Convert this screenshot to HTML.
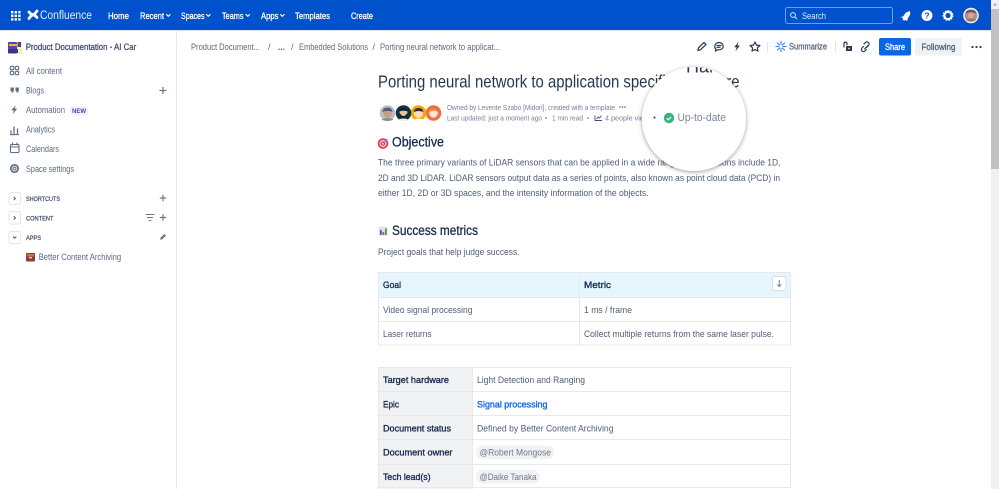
<!DOCTYPE html>
<html lang="en"><head><meta charset="utf-8"><title>Porting neural network to application specific hardware</title>
<style>
html,body{margin:0;padding:0;width:999px;height:489px;overflow:hidden;background:#fff}
svg{display:block;position:absolute;left:0;top:0;filter:blur(.3px)}
text{font-family:"Liberation Sans",sans-serif;white-space:pre}
.n{font-size:9px;fill:#fff;stroke:#fff;stroke-width:.28px}
.s{font-size:9px;fill:#5b6a82}
.b{font-size:9.5px;fill:#4f5d75}
.l{font-size:9.5px;fill:#172b4d;stroke:#172b4d;stroke-width:.35px}
.m{font-size:7.4px;fill:#76829a}
.h{font-size:13.5px;fill:#172b4d;stroke:#172b4d;stroke-width:.3px}
.c{font-size:6.8px;fill:#42526e;stroke:#42526e;stroke-width:.25px}
.i{fill:none;stroke:#253858;stroke-width:1.2;stroke-linecap:round;stroke-linejoin:round}
.g{fill:none;stroke:#5e6c84;stroke-width:1.1;stroke-linecap:round;stroke-linejoin:round}
</style></head><body>
<svg width="999" height="489" viewBox="0 0 999 489" xmlns="http://www.w3.org/2000/svg">
<defs>
<clipPath id="mag"><circle cx="694" cy="119" r="52"/></clipPath>
<filter id="sh" x="-30%" y="-30%" width="160%" height="160%"><feDropShadow dx="0" dy="1" stdDeviation="2" flood-color="#000" flood-opacity=".4"/></filter>
</defs>
<rect width="999" height="489" fill="#fff"/>

<!-- top bar -->
<rect width="991" height="30" fill="#0052cc"/>
<rect y="30" width="991" height="1" fill="#dfe5ee"/>
<g fill="#fff">
<rect x="11" y="11" width="2.4" height="2.4"/><rect x="14.6" y="11" width="2.4" height="2.4"/><rect x="18.2" y="11" width="2.4" height="2.4"/>
<rect x="11" y="14.6" width="2.4" height="2.4"/><rect x="14.6" y="14.6" width="2.4" height="2.4"/><rect x="18.2" y="14.6" width="2.4" height="2.4"/>
<rect x="11" y="18.2" width="2.4" height="2.4"/><rect x="14.6" y="18.2" width="2.4" height="2.4"/><rect x="18.2" y="18.2" width="2.4" height="2.4"/>
</g>
<path d="M29 18.5c2.500-4 4.800-5 8 -1M29 12c3 4 5.300 3 8-1" fill="none" stroke="#fff" stroke-width="2.800" stroke-linecap="round"/>
<text x="40" y="19.200" font-size="11.500" fill="#e6eefa" textLength="52" lengthAdjust="spacingAndGlyphs">Confluence</text>
<text class="n" x="108" y="18.800" textLength="21" lengthAdjust="spacingAndGlyphs">Home</text>
<text class="n" x="140" y="18.800" textLength="24" lengthAdjust="spacingAndGlyphs">Recent</text>
<text class="n" x="181" y="18.800" textLength="23.500" lengthAdjust="spacingAndGlyphs">Spaces</text>
<text class="n" x="222" y="18.800" textLength="21.500" lengthAdjust="spacingAndGlyphs">Teams</text>
<text class="n" x="261" y="18.800" textLength="17.500" lengthAdjust="spacingAndGlyphs">Apps</text>
<text class="n" x="295" y="18.800" textLength="35" lengthAdjust="spacingAndGlyphs">Templates</text>
<text class="n" x="351" y="18.800" textLength="22" lengthAdjust="spacingAndGlyphs">Create</text>
<g fill="none" stroke="#fff" stroke-width="1.100" stroke-linecap="round" stroke-linejoin="round">
<path d="M166.500 14.500l1.800 1.800 1.800-1.800M206.500 14.500l1.800 1.800 1.800-1.800M246 14.500l1.800 1.800 1.800-1.800M280.500 14.500l1.800 1.800 1.800-1.800"/>
</g>
<rect x="785.500" y="7.500" width="107" height="16" rx="2" fill="#0052cc" stroke="#6f9fe6"/>
<circle cx="793" cy="15" r="2.400" fill="none" stroke="#dce8fa" stroke-width="1"/><path d="M794.800 16.800l2 2" stroke="#dce8fa" stroke-width="1" stroke-linecap="round"/>
<text x="802" y="18.800" font-size="9" fill="#dce8fa" textLength="24" lengthAdjust="spacingAndGlyphs">Search</text>
<path d="M900.500 17l2.500-.5 3-4 4-1.500 .2 3.500-2.500 4-.5 2.500-2-1-1.200.8-1.500-1.500.6-1.200z" fill="#fff"/>
<circle cx="927" cy="15.500" r="5.500" fill="#fff"/><text x="927" y="18.700" font-size="8.500" font-weight="bold" fill="#0052cc" text-anchor="middle">?</text>
<circle cx="948" cy="15.500" r="3.600" fill="none" stroke="#fff" stroke-width="2"/><circle cx="948" cy="15.500" r="4.700" fill="none" stroke="#fff" stroke-width="1.500" stroke-dasharray="1.600 1.100"/>
<circle cx="971" cy="15.500" r="7.800" fill="#f3f3f3"/><circle cx="971" cy="15.500" r="6.300" fill="#b68d7c"/><path d="M965.500 13c1-4 10-4 11 0l-1.500 0c-3-1-6-1-8 0z" fill="#58597a"/><circle cx="971" cy="15.500" r="3" fill="#d8a78e"/><path d="M966 20c2-2 8-2 10 0-2 2-8 2-10 0z" fill="#8a7a78"/>

<!-- sidebar -->
<rect x="176" y="31" width="1" height="458" fill="#e6e8ec"/>
<rect x="8" y="42" width="14" height="12" fill="#f7f0b8"/><rect x="8" y="42" width="9" height="11.500" rx="1" fill="#5e3fb5"/><rect x="9" y="44" width="8" height="2" fill="#f2b631"/><rect x="8" y="49" width="10" height="4" fill="#42328c"/><rect x="17.500" y="42" width="3.500" height="5" fill="#42526e"/>
<text x="25.700" y="49.800" font-size="9" fill="#42526e" stroke="#42526e" stroke-width=".3" textLength="110.500" lengthAdjust="spacingAndGlyphs">Product Documentation - AI Car</text>
<g class="g">
<rect x="10.300" y="66.300" width="3.400" height="3.400" rx="1.200"/><rect x="15.300" y="66.300" width="3.400" height="3.400" rx="1.200"/><rect x="10.300" y="71.300" width="3.400" height="3.400" rx="1.200"/><rect x="15.300" y="71.300" width="3.400" height="3.400" rx="1.200"/>
<rect x="10.500" y="144.500" width="8.500" height="8" rx="1"/><path d="M10.500 147h8.500M12.500 143v2M17 143v2"/>
<circle cx="14.500" cy="168.500" r="1.500"/><circle cx="14.500" cy="168.500" r="3.700" stroke-width="1.700"/>
</g>
<path d="M10.500 87.500h3.300v3c0 1.300-.8 2-2.200 2.500v-2h-1.100zM15.500 87.500h3.300v3c0 1.300-.8 2-2.200 2.500v-2h-1.100z" fill="#5e6c84"/>
<path d="M15.800 105.200l-4.500 5h2.500l-1.200 3.900 4.600-5.300h-2.500z" fill="#5e6c84"/>
<path d="M11 133.500v-3M14 133.500v-7M17.500 133.500v-5M10 134.500h9" fill="none" stroke="#5e6c84" stroke-width="1.300"/>
<text class="s" x="26" y="74" textLength="36" lengthAdjust="spacingAndGlyphs">All content</text>
<text class="s" x="26" y="93.500" textLength="18" lengthAdjust="spacingAndGlyphs">Blogs</text>
<text class="s" x="26" y="113" textLength="39" lengthAdjust="spacingAndGlyphs">Automation</text>
<rect x="70" y="106" width="18" height="9" rx="1.500" fill="#f3f0ff"/>
<text x="72" y="113" font-size="6px" font-weight="bold" fill="#5243aa" textLength="14" lengthAdjust="spacingAndGlyphs">NEW</text>
<text class="s" x="26" y="132.500" textLength="29" lengthAdjust="spacingAndGlyphs">Analytics</text>
<text class="s" x="26" y="152" textLength="33" lengthAdjust="spacingAndGlyphs">Calendars</text>
<text class="s" x="26" y="171.800" textLength="48" lengthAdjust="spacingAndGlyphs">Space settings</text>
<g fill="#fff" stroke="#e4e6ea"><rect x="9" y="192.500" width="11.500" height="12" rx="2"/><rect x="9" y="211.500" width="11.500" height="12.500" rx="2"/><rect x="9" y="231.500" width="11.500" height="12" rx="2"/></g>
<path d="M13.700 196.800l1.700 1.700-1.700 1.700M13.700 216.200l1.700 1.700-1.700 1.700M13 236.500l1.700 1.700 1.700-1.700" fill="none" stroke="#42526e" stroke-width="1"/>
<text class="c" x="26" y="200.800" textLength="34" lengthAdjust="spacingAndGlyphs">SHORTCUTS</text>
<text class="c" x="26" y="220.300" textLength="27.500" lengthAdjust="spacingAndGlyphs">CONTENT</text>
<text class="c" x="26" y="240" textLength="15" lengthAdjust="spacingAndGlyphs">APPS</text>
<path d="M159.500 90.500h7M163 87v7M159.800 198h6.500M163 194.800v6.500M159.800 217.500h6.500M163 214.300v6.500" stroke="#6b778c" stroke-width="1.200" fill="none"/>
<path d="M145.500 214.500h9M147 217.500h6M148.800 220.500h2.500" stroke="#6b778c" stroke-width="1" fill="none"/>
<path d="M160 239.800l.6-2.300 3.700-3.500 1.700 1.600-3.700 3.600z" fill="#6b778c"/>
<rect x="26" y="253" width="9" height="8.500" rx="1" fill="#8c3f2b"/><rect x="27" y="254" width="7" height="2.500" fill="#c76d50"/><rect x="29" y="257" width="3" height="1.300" fill="#f0d8cf"/>
<text class="s" x="38.700" y="259.800" textLength="82.500" lengthAdjust="spacingAndGlyphs">Better Content Archiving</text>

<!-- breadcrumb -->
<text class="s" x="191" y="50" textLength="69" lengthAdjust="spacingAndGlyphs">Product Document...</text>
<text class="s" x="268" y="50">/</text>
<text class="s" x="278" y="50" font-weight="bold" textLength="7" lengthAdjust="spacingAndGlyphs">...</text>
<text class="s" x="291" y="50">/</text>
<text class="s" x="299" y="50" textLength="69" lengthAdjust="spacingAndGlyphs">Embedded Solutions</text>
<text class="s" x="372.500" y="50">/</text>
<text class="s" x="380" y="50" textLength="120" lengthAdjust="spacingAndGlyphs">Porting neural network to applicat...</text>

<!-- actions -->
<path d="M697.800 50.500l.8-2.800 5.400-5.300 2 2-5.400 5.300z" class="i"/>
<path d="M714.800 46.200c0-2.200 2-3.700 4.200-3.700s4.200 1.500 4.200 3.700-2 3.600-4.200 3.600h-1.500l-2 1.300.3-2c-.7-.6-1-1.800-1-2.900zM717 45.500h4M717 47.300h3" class="i"/>
<path d="M738.500 41.800l-4.300 5.500h2.500l-1.300 4 4.500-5.700h-2.500z" fill="#253858"/>
<path d="M755 42l1.500 3.100 3.400.4-2.500 2.300.6 3.300-3-1.600-3 1.600.6-3.300-2.500-2.300 3.400-.4z" class="i"/>
<rect x="767" y="42" width="1" height="10" fill="#e2e4e9"/>
<g stroke="#3d8be8" stroke-width="1.200" stroke-linecap="round"><path d="M781 41.500v3M781 48.500v3M776 46.500h3M783 46.500h3M777.500 43l2 2M782.500 48l2 2M784.500 43l-2 2M779.500 48l-2 2"/></g>
<text x="789" y="49.700" font-size="9" fill="#505f79" stroke="#505f79" stroke-width=".25" textLength="38" lengthAdjust="spacingAndGlyphs">Summarize</text>
<rect x="835" y="42" width="1" height="10" fill="#e2e4e9"/>
<path d="M844 47v-3.200c0-2.200 3-2.200 3 0v1" class="i"/><rect x="846" y="46" width="6" height="5" rx=".5" fill="#253858"/><rect x="848.300" y="47.800" width="1.400" height="1.400" fill="#fff"/>
<path d="M864.500 49l3.500-3.500M863.500 46.500l-1.500 1.500a2 2 0 0 0 3 3l1.500-1.500M866.500 47.500l2-2a2 2 0 0 0-3-3l-1.500 1.500" class="i"/>
<rect x="879" y="38" width="32" height="17.500" rx="2" fill="#0c66e4"/>
<text x="885" y="50" font-size="9" fill="#fff" stroke="#fff" stroke-width=".3" textLength="20" lengthAdjust="spacingAndGlyphs">Share</text>
<rect x="915" y="38" width="47" height="17.500" rx="2" fill="#f1f2f4"/>
<text x="921.500" y="50" font-size="9" fill="#505f79" stroke="#505f79" stroke-width=".3" textLength="34" lengthAdjust="spacingAndGlyphs">Following</text>
<g fill="#253858"><circle cx="972.500" cy="47" r="1.100"/><circle cx="976.500" cy="47" r="1.100"/><circle cx="980.500" cy="47" r="1.100"/></g>

<!-- title + meta -->
<text x="378" y="87.700" font-size="17.500px" fill="#253858" textLength="361.500" lengthAdjust="spacingAndGlyphs">Porting neural network to application specific hardware</text>
<circle cx="433.500" cy="113" r="7.800" fill="#f26f3d"/><circle cx="433.500" cy="113.500" r="4.200" fill="#fde6d8"/><path d="M428.500 115c-1.500-8 11-8 10 0l-1.200-3c-2-1.500-5.500-1.500-7.600 0z" fill="#f59a5c"/>
<circle cx="418.500" cy="113" r="7.800" fill="#f6a800"/><circle cx="418.500" cy="113.500" r="4.500" fill="#fbdcc0"/><path d="M413.800 112c0-5.500 9.500-5.500 9.500 0-3-1.200-6.500-1.200-9.500 0z" fill="#3a3328"/><path d="M412.500 120.500c3-2.500 9-2.500 12 0-3 1.500-9 1.500-12 0z" fill="#fff"/>
<circle cx="403.500" cy="113" r="7.800" fill="#10333f"/><circle cx="403.500" cy="112.300" r="4" fill="#e9c0a0"/><path d="M399.300 111.500c0-5 8.400-5 8.400 0-2-1-6.400-1-8.400 0zM399.800 113c1.800 4 5.600 4 7.400 0l.2 3-3.900 2.500-3.900-2.500z" fill="#10222c"/><path d="M398 120c3-2 8-2 11 0-3 1.500-8 1.500-11 0z" fill="#eee"/>
<circle cx="387.500" cy="113" r="8.200" fill="#fff"/><circle cx="387.500" cy="113" r="7.800" fill="#b9bfc9"/><circle cx="387.500" cy="113.500" r="4.200" fill="#c99c85"/><path d="M382.500 112c-.5-6 10-6 10 0-3-1.500-7-1.500-10 0z" fill="#5a5a7d"/><path d="M381.500 119.500c3-2 9-2 12 0-3 2-9 2-12 0z" fill="#8b8d92"/>
<text class="m" x="447" y="110.200" textLength="168" lengthAdjust="spacingAndGlyphs">Owned by Levente Szabo [Midori], created with a template</text>
<g fill="#505f79"><circle cx="620" cy="107" r=".8"/><circle cx="622.500" cy="107" r=".8"/><circle cx="625" cy="107" r=".8"/><circle cx="546" cy="118" r=".8"/><circle cx="588" cy="118" r=".8"/></g>
<text class="m" x="447" y="120.300" textLength="95" lengthAdjust="spacingAndGlyphs">Last updated: just a moment ago</text>
<text class="m" x="552" y="120.300" textLength="31" lengthAdjust="spacingAndGlyphs">1 min read</text>
<path d="M595 115.500v5h7M596.500 119l1.700-2 1.300 1 2-2.300" fill="none" stroke="#42526e" stroke-width=".9"/>
<text class="m" x="605" y="120.300" textLength="52" lengthAdjust="spacingAndGlyphs">4 people viewed</text>

<!-- objective -->
<circle cx="383" cy="143.500" r="5.300" fill="#e8384f"/><circle cx="383" cy="143.500" r="3.600" fill="#fbd5da"/><circle cx="383" cy="143.500" r="2.300" fill="#e8384f"/><circle cx="383" cy="143.500" r="1" fill="#fff"/><path d="M383 143.500l4.500-4.500" stroke="#4a90d9" stroke-width="1"/>
<text class="h" x="392" y="146.700" textLength="52" lengthAdjust="spacingAndGlyphs">Objective</text>
<text class="b" x="378" y="165.700" textLength="402.500" lengthAdjust="spacingAndGlyphs">The three primary variants of LiDAR sensors that can be applied in a wide range of applications include 1D,</text>
<text class="b" x="378" y="180.800" textLength="402" lengthAdjust="spacingAndGlyphs">2D and 3D LiDAR. LiDAR sensors output data as a series of points, also known as point cloud data (PCD) in</text>
<text class="b" x="378" y="195.800" textLength="270.500" lengthAdjust="spacingAndGlyphs">either 1D, 2D or 3D spaces, and the intensity information of the objects.</text>

<!-- success metrics -->
<rect x="378.500" y="226.500" width="9" height="9" fill="#d9e4ec"/><rect x="380" y="230" width="1.800" height="5" fill="#3a6ea5"/><rect x="382.500" y="232" width="1.800" height="3" fill="#e0433e"/><rect x="385" y="228.500" width="1.800" height="6.500" fill="#4c9a54"/>
<text class="h" x="392" y="235" textLength="86" lengthAdjust="spacingAndGlyphs">Success metrics</text>
<text class="b" x="378" y="254.800" textLength="141.500" lengthAdjust="spacingAndGlyphs">Project goals that help judge success.</text>

<!-- table 1 -->
<rect x="378.500" y="272.500" width="412" height="72.500" fill="#fff" stroke="#e6e8ec"/>
<rect x="379" y="273" width="411" height="24" fill="#e5f6fe"/>
<path d="M378.500 297.500h412M378.500 321.500h412M579.500 272.500v72.500" stroke="#e6e8ec" fill="none"/>
<text class="l" x="383" y="288" textLength="18" lengthAdjust="spacingAndGlyphs">Goal</text>
<text class="l" x="584" y="288" textLength="27" lengthAdjust="spacingAndGlyphs">Metric</text>
<rect x="772.500" y="276.500" width="13.500" height="14" rx="2" fill="#fff" stroke="#d8dce3"/>
<path d="M779.300 280v6.500M777.300 284.500l2 2 2-2" fill="none" stroke="#7a869a" stroke-width="1"/>
<text class="b" x="383" y="312.800" textLength="89.500" lengthAdjust="spacingAndGlyphs">Video signal processing</text>
<text class="b" x="584" y="312.800" textLength="48" lengthAdjust="spacingAndGlyphs">1 ms / frame</text>
<text class="b" x="383" y="337" textLength="48.500" lengthAdjust="spacingAndGlyphs">Laser returns</text>
<text class="b" x="584" y="337" textLength="190" lengthAdjust="spacingAndGlyphs">Collect multiple returns from the same laser pulse.</text>

<!-- table 2 -->
<rect x="378.500" y="367.500" width="412" height="130" fill="#fff" stroke="#e6e8ec"/>
<rect x="379" y="368" width="93" height="121" fill="#f1f2f4"/>
<path d="M378.500 391.500h412M378.500 415.500h412M378.500 439.500h412M378.500 464.500h412M378.500 487.500h412M472.500 367.500v122" stroke="#e6e8ec" fill="none"/>
<text class="l" x="383" y="383.200" textLength="66" lengthAdjust="spacingAndGlyphs">Target hardware</text>
<text class="l" x="383" y="407.300" textLength="16" lengthAdjust="spacingAndGlyphs">Epic</text>
<text class="l" x="383" y="431.500" textLength="68" lengthAdjust="spacingAndGlyphs">Document status</text>
<text class="l" x="383" y="455.700" textLength="69.500" lengthAdjust="spacingAndGlyphs">Document owner</text>
<text class="l" x="383" y="479.800" textLength="47.500" lengthAdjust="spacingAndGlyphs">Tech lead(s)</text>
<text class="b" x="477" y="383.200" textLength="108" lengthAdjust="spacingAndGlyphs">Light Detection and Ranging</text>
<text x="477" y="407.300" font-size="9.500px" fill="#0c66e4" stroke="#0c66e4" stroke-width=".35" textLength="70.500" lengthAdjust="spacingAndGlyphs">Signal processing</text>
<text class="b" x="477" y="431.500" textLength="136.500" lengthAdjust="spacingAndGlyphs">Defined by Better Content Archiving</text>
<rect x="476" y="445.500" width="78" height="13.500" rx="6.700" fill="#f1f2f4"/>
<text class="b" x="479.500" y="455.700" style="fill:#6b778c" textLength="71.500" lengthAdjust="spacingAndGlyphs">@Robert Mongose</text>
<rect x="476" y="470" width="63.500" height="13.500" rx="6.700" fill="#f1f2f4"/>
<text class="b" x="479.500" y="480" style="fill:#6b778c" textLength="57" lengthAdjust="spacingAndGlyphs">@Daike Tanaka</text>

<!-- magnifier -->
<circle cx="694" cy="119" r="52" fill="#fff" filter="url(#sh)"/>
<g clip-path="url(#mag)">
<text x="686" y="72.500" font-size="18px" fill="#253858">Hardware</text>
<circle cx="654.500" cy="117.500" r="1.100" fill="#42526e"/>
<circle cx="669" cy="118" r="5.200" fill="#36b37e"/>
<path d="M666.800 118.200l1.600 1.600 2.800-2.900" fill="none" stroke="#fff" stroke-width="1.100"/>
<text x="677.500" y="121.200" font-size="10.800px" fill="#7a869a" textLength="48.500" lengthAdjust="spacingAndGlyphs">Up-to-date</text>
</g>

<!-- scrollbar -->
<rect x="991" width="8" height="489" fill="#f1f1f1"/>
<rect x="991" y="9" width="8" height="160" fill="#c1c1c1"/>
<path d="M995 3l-2 2.500h4z" fill="#a3a3a3"/>
</svg>
</body></html>
